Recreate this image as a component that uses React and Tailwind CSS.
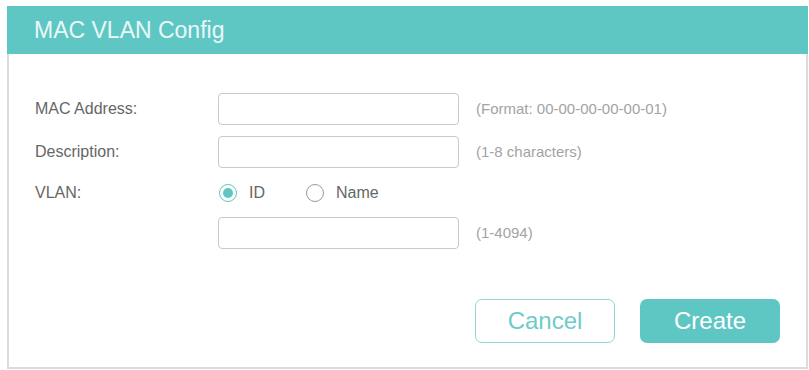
export default function App() {
  const font = { fontFamily: '"Liberation Sans", Arial, Helvetica, sans-serif' };
  return (
    <div className="w-[809px] h-[370px] bg-white pt-[6px] pl-[7px] pr-[1px] pb-[1px]" style={font}>
      <div className="w-full h-full border-2 border-t-0 border-[#dcdcdc] flex flex-col">
        <div className="h-[48px] bg-[#5ec7c3] flex items-center pl-[27px] -mx-[2px]">
          <span className="text-[23px] text-[#eaf8f7] leading-none">MAC VLAN Config</span>
        </div>
        <div className="flex-1 flex flex-col pl-[26px] pr-[26px] pt-[39px]">
          <div className="grid grid-cols-[183px_241px_1fr] items-center gap-y-[11px]">
            <div className="text-[16px] text-[#666]">MAC Address:</div>
            <input className="h-[32px] border border-[#c9c9c9] rounded-[4px] outline-none px-2" />
            <div className="pl-[17px] text-[15px] text-[#a3a3a3]">(Format: 00-00-00-00-00-01)</div>

            <div className="text-[16px] text-[#666]">Description:</div>
            <input className="h-[32px] border border-[#c9c9c9] rounded-[4px] outline-none px-2" />
            <div className="pl-[17px] text-[15px] text-[#a3a3a3]">(1-8 characters)</div>

            <div className="text-[16px] text-[#666] h-[26px] flex items-center mt-[1px]">VLAN:</div>
            <div className="flex items-center h-[26px] mt-[1px] text-[16px] text-[#666]">
              <span className="w-[18px] h-[18px] rounded-full border-[1.5px] border-[#5ec7c3] flex items-center justify-center ml-[1px]">
                <span className="w-[10px] h-[10px] rounded-full bg-[#5ec7c3]" />
              </span>
              <span className="ml-[12px]">ID</span>
              <span className="w-[18px] h-[18px] rounded-full border-[1.5px] border-[#9a9a9a] ml-[41px]" />
              <span className="ml-[12px]">Name</span>
            </div>
            <div />

            <div />
            <input className="h-[32px] border border-[#c9c9c9] rounded-[4px] outline-none px-2" />
            <div className="pl-[17px] text-[15px] text-[#a3a3a3]">(1-4094)</div>
          </div>
          <div className="flex justify-end gap-[25px] mt-[50px]">
            <button className="w-[140px] h-[44px] rounded-[7px] border border-[#8fd6d2] text-[#6fcbc7] text-[24px] bg-white">Cancel</button>
            <button className="w-[140px] h-[44px] rounded-[7px] bg-[#5ec7c3] text-white text-[24px]">Create</button>
          </div>
        </div>
      </div>
    </div>
  );
}
